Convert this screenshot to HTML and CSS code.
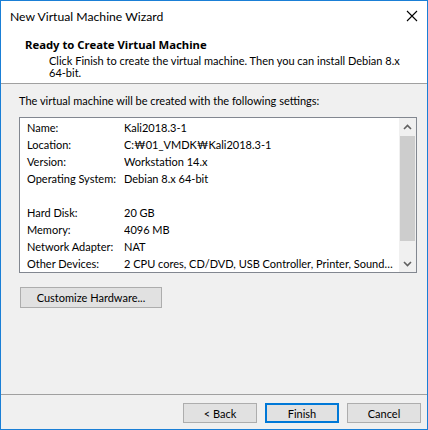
FILE: index.html
```html
<!DOCTYPE html>
<html>
<head>
<meta charset="utf-8">
<link rel="stylesheet" href="styles.css">
</head>
<body>
<div class="window">
  <div class="titlebar">
    <span class="title">New Virtual Machine Wizard</span>
    <svg class="close" width="12" height="12" viewBox="0 0 12 12"><path d="M1 1 L11 11 M11 1 L1 11" stroke="#000" stroke-width="1.1" fill="none"/></svg>
  </div>
  <div class="header">
    <div class="h-title">Ready to Create Virtual Machine</div>
    <div class="h-desc">Click Finish to create the virtual machine. Then you can install Debian 8.x 64-bit.</div>
  </div>
  <div class="main">
    <div class="intro">The virtual machine will be created with the following settings:</div>
    <div class="listbox">
      <div class="rows">
        <div class="row"><span class="k">Name:</span><span class="v">Kali2018.3-1</span></div>
        <div class="row"><span class="k">Location:</span><span class="v">C:₩01_VMDK₩Kali2018.3-1</span></div>
        <div class="row"><span class="k">Version:</span><span class="v">Workstation 14.x</span></div>
        <div class="row"><span class="k">Operating System:</span><span class="v">Debian 8.x 64-bit</span></div>
        <div class="row"><span class="k"></span><span class="v"></span></div>
        <div class="row"><span class="k">Hard Disk:</span><span class="v">20 GB</span></div>
        <div class="row"><span class="k">Memory:</span><span class="v">4096 MB</span></div>
        <div class="row"><span class="k">Network Adapter:</span><span class="v">NAT</span></div>
        <div class="row"><span class="k">Other Devices:</span><span class="v">2 CPU cores, CD/DVD, USB Controller, Printer, Sound…</span></div>
      </div>
      <div class="scrollbar">
        <div class="sb-btn"><svg width="9" height="6" viewBox="0 0 9 6"><path d="M1 5 L4.5 1.5 L8 5" stroke="#606060" stroke-width="1.6" fill="none"/></svg></div>
        <div class="sb-track"><div class="sb-thumb"></div></div>
        <div class="sb-btn"><svg width="9" height="6" viewBox="0 0 9 6"><path d="M1 1 L4.5 4.5 L8 1" stroke="#606060" stroke-width="1.6" fill="none"/></svg></div>
      </div>
    </div>
    <div class="btn custom">Customize Hardware...</div>
  </div>
  <div class="footer">
    <div class="btn">&lt; Back</div>
    <div class="btn primary">Finish</div>
    <div class="btn">Cancel</div>
  </div>
</div>
</body>
</html>
```
FILE: styles.css
```css
html, body {
  margin: 0;
  padding: 0;
  background: #f0f0f0;
}
.window {
  box-sizing: border-box;
  width: 428px;
  height: 430px;
  border: 1px solid #1a7fd6;
  background: #f0f0f0;
  display: flex;
  flex-direction: column;
  font-family: Lato, "Noto Sans", sans-serif;
  font-size: 11px;
  color: #000;
  overflow: hidden;
}
.titlebar {
  height: 30px;
  background: #fff;
  display: flex;
  align-items: center;
  justify-content: space-between;
  padding: 0 9px 0 9px;
  flex: none;
}
.title {
  font-size: 12.2px;
  color: #000;
}
.close {
  display: block;
  margin-top: -1px;
}
.header {
  background: #fff;
  height: 46px;
  padding-top: 6px;
  border-bottom: 1px solid #a0a0a0;
  flex: none;
}
.h-title {
  font-family: "Noto Sans", Lato, sans-serif;
  font-size: 11.3px;
  font-weight: bold;
  padding-left: 24px;
  line-height: 15px;
}
.h-desc {
  padding-left: 48px;
  padding-right: 20px;
  margin-top: 3px;
  line-height: 12px;
}
.main {
  flex: 1;
  padding: 9px 10px 0 18px;
}
.intro {
  line-height: 15px;
}
.listbox {
  margin-top: 9px;
  height: 154px;
  border: 1px solid #828790;
  background: #fff;
  display: flex;
}
.rows {
  flex: 1;
  padding-top: 1px;
  overflow: hidden;
}
.row {
  display: flex;
  height: 17px;
  line-height: 17px;
  white-space: nowrap;
}
.k {
  width: 97px;
  padding-left: 7px;
  flex: none;
}
.v {
  flex: 1;
  overflow: hidden;
}
.scrollbar {
  width: 17px;
  background: #f0f0f0;
  display: flex;
  flex-direction: column;
  flex: none;
}
.sb-btn {
  height: 17px;
  display: flex;
  align-items: center;
  justify-content: center;
  flex: none;
}
.sb-track {
  flex: 1;
  padding: 1px 1px 0;
}
.sb-thumb {
  height: 105px;
  background: #cdcdcd;
}
.btn {
  box-sizing: border-box;
  height: 20px;
  width: 74px;
  border: 1px solid #adadad;
  background: #e1e1e1;
  display: flex;
  align-items: center;
  justify-content: center;
}
.btn.custom {
  width: 142px;
  height: 21px;
  margin-top: 14px;
  margin-left: 1px;
}
.btn.primary {
  border: 2px solid #0078d7;
}
.footer {
  flex: none;
  border-top: 1px solid #a0a0a0;
  height: 35px;
  box-sizing: border-box;
  padding: 8px 6px 0 0;
  display: flex;
  justify-content: flex-end;
  gap: 8px;
}
```
